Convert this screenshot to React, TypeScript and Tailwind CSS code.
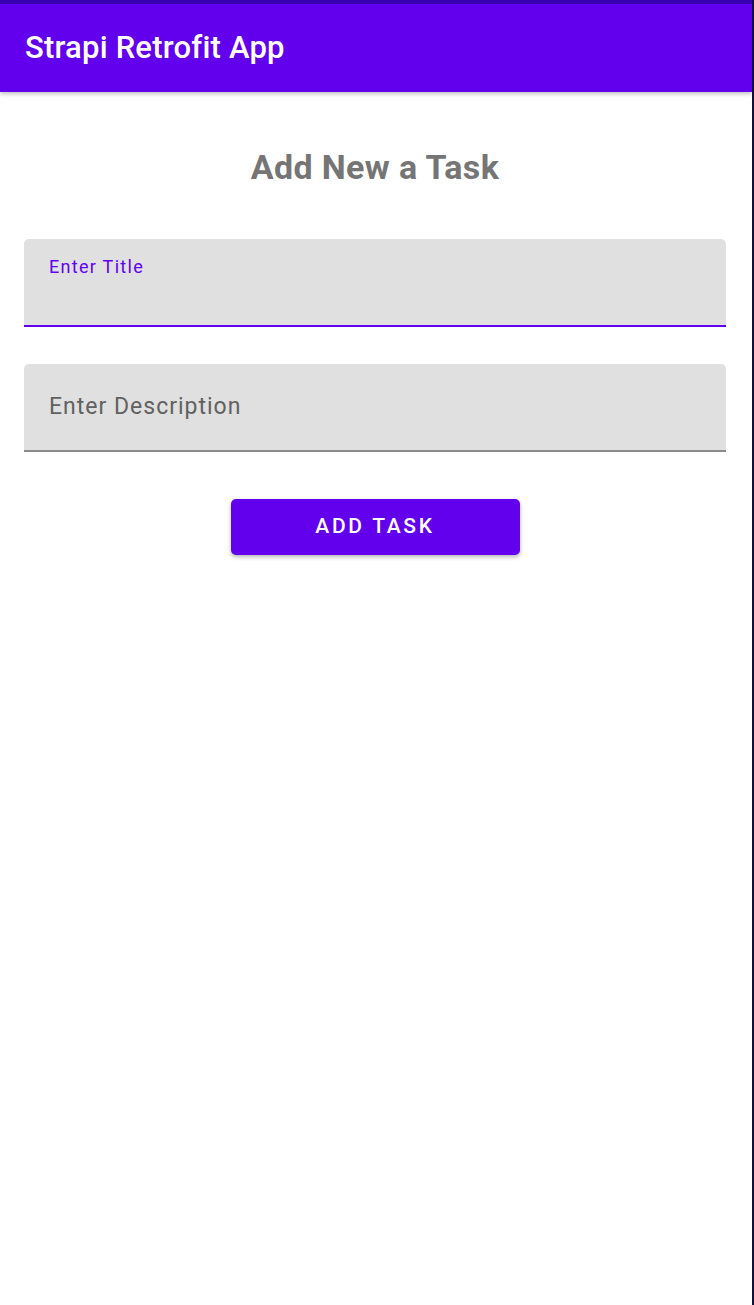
export default function App() {
  return (
    <div className="flex min-h-[1305px] w-[754px] bg-[#10103a] font-['Roboto',sans-serif]">
      <div className="flex w-[752px] flex-col bg-white">
        <div className="h-[4px] bg-[#3700b3]" />
        <header className="relative z-10 flex h-[88px] items-center bg-[#6200ee] px-[25px] shadow-[0_2px_4px_rgba(0,0,0,0.25)]">
          <h1 className="text-[31px] font-medium tracking-[0.2px] text-white">Strapi Retrofit App</h1>
        </header>

        <main className="flex flex-col pl-[24px] pr-[26px] pt-[52px]">
          <h2 className="text-center text-[34px] font-bold leading-[46px] tracking-[0.35px] text-[#757575]">Add New a Task</h2>

          <div className="mt-[49px] h-[88px] rounded-t-[5px] border-b-2 border-[#6200ee] bg-[#e0e0e0] px-[25px] pt-[17px]">
            <label className="block text-[18px] leading-[22px] tracking-[1.3px] text-[#6200ee]">Enter Title</label>
          </div>

          <div className="mt-[37px] flex h-[88px] items-center rounded-t-[5px] border-b-2 border-[#8a8a8a] bg-[#e0e0e0] px-[25px]">
            <span className="text-[23px] tracking-[1px] text-[#616161]">Enter Description</span>
          </div>

          <div className="mt-[47px] flex justify-center">
            <button className="h-[56px] w-[289px] rounded-[5px] bg-[#6200ee] text-[21px] font-medium tracking-[2.7px] text-white shadow-[0_2px_4px_rgba(0,0,0,0.3)]">
              ADD TASK
            </button>
          </div>
        </main>
      </div>
    </div>
  )
}
